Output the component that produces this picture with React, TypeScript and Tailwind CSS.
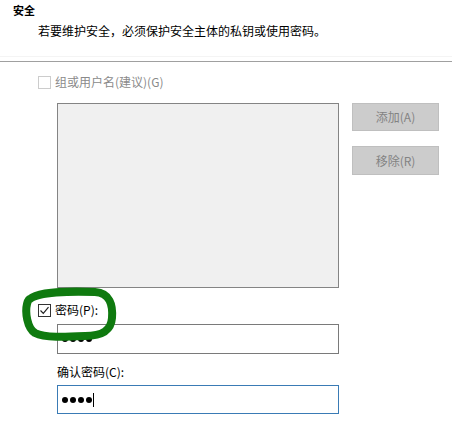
import React from "react";

const font = { fontFamily: '"Noto Sans CJK SC", "Noto Sans", sans-serif' };

function Dots() {
  return (
    <div className="flex gap-[2px] items-center">
      {[0, 1, 2, 3].map((i) => (
        <span key={i} className="block w-[6px] h-[6px] rounded-full bg-black" />
      ))}
    </div>
  );
}

export default function App() {
  return (
    <div className="relative w-[452px] h-[427px] bg-white text-black overflow-hidden" style={font}>
      <div className="pl-[13px] pt-[3px] text-[11px] leading-[14px] font-bold">安全</div>
      <div className="pl-[38px] pt-[6px] text-[12px] leading-[16px]">若要维护安全，必须保护安全主体的私钥或使用密码。</div>
      <div className="mt-[17px] h-px bg-[#f4f4f4]" />
      <div className="mt-[4px] h-px bg-[#a0a0a0]" />

      <div className="mt-[12px] pl-[38px] flex items-center gap-[4px]">
        <span className="block w-[13px] h-[13px] border border-[#cccccc] bg-white" />
        <span className="text-[12px] leading-[16px] text-[#8a8a8a]">组或用户名(建议)(G)</span>
      </div>

      <div className="mt-[13px] pl-[57px] flex gap-[13px]">
        <div className="w-[282px] h-[185px] border border-[#848484] bg-[#f0f0f0]" />
        <div className="flex flex-col gap-[15px]">
          <div className="w-[87px] h-[28px] border border-[#bfbfbf] bg-[#cccccc] flex items-center justify-center text-[12px] text-[#838383]">添加(A)</div>
          <div className="w-[87px] h-[29px] border border-[#bfbfbf] bg-[#cccccc] flex items-center justify-center text-[12px] text-[#838383]">移除(R)</div>
        </div>
      </div>

      <div className="mt-[14px] pl-[38px] flex items-center gap-[4px]">
        <span className="flex w-[13px] h-[13px] border border-[#333333] bg-white items-center justify-center">
          <svg width="11" height="11" viewBox="0 0 11 11">
            <path d="M1.5 5.5 L4.3 8.3 L9.5 2.2" fill="none" stroke="#222" strokeWidth="1.2" />
          </svg>
        </span>
        <span className="text-[12px] leading-[16px]">密码(P):</span>
      </div>

      <div className="mt-[6px] ml-[57px] w-[282px] h-[30px] border border-[#7a7a7a] bg-white flex items-center pl-[4px]">
        <Dots />
      </div>

      <div className="mt-[10px] pl-[57px] text-[12px] leading-[16px]">确认密码(C):</div>

      <div className="mt-[5px] ml-[57px] w-[282px] h-[29px] border border-[#3a7bb5] bg-white flex items-center pl-[4px]">
        <Dots />
        <span className="block ml-[1px] w-px h-[14px] bg-black" />
      </div>

      <svg className="absolute left-0 top-0 pointer-events-none" width="452" height="427">
        <path
          d="M30 299 C 38 292, 70 291, 95 292 C 110 293, 113 305, 112 318 C 111 330, 103 336, 85 336 C 65 337, 45 338, 35 333 C 27 328, 25 312, 27 304 C 28 300, 29 299, 30 299 Z"
          fill="none"
          stroke="#0f7a0f"
          strokeWidth="8"
          strokeLinejoin="round"
        />
      </svg>
    </div>
  );
}
